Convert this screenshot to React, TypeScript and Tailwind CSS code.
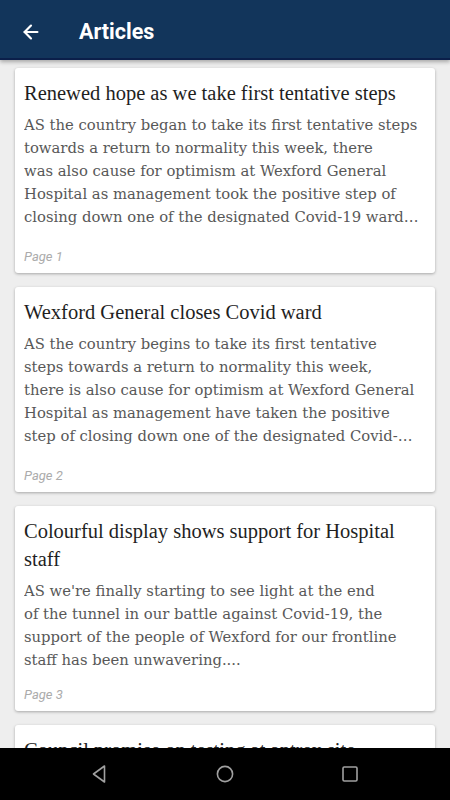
import { ArrowLeft } from "lucide-react";

interface Article {
  title: string;
  lines: string[];
  page: number;
}

// 参照画像の改行位置に合わせて要約を行ごとに保持
const articles: Article[] = [
  {
    title: "Renewed hope as we take first tentative steps",
    lines: [
      "AS the country began to take its first tentative steps",
      "towards a return to normality this week, there",
      "was also cause for optimism at Wexford General",
      "Hospital as management took the positive step of",
      "closing down one of the designated Covid-19 wards at the hospital.",
    ],
    page: 1,
  },
  {
    title: "Wexford General closes Covid ward",
    lines: [
      "AS the country begins to take its first tentative",
      "steps towards a return to normality this week,",
      "there is also cause for optimism at Wexford General",
      "Hospital as management have taken the positive",
      "step of closing down one of the designated Covid-19 wards.",
    ],
    page: 2,
  },
  {
    title: "Colourful display shows support for Hospital staff",
    lines: [
      "AS we're finally starting to see light at the end",
      "of the tunnel in our battle against Covid-19, the",
      "support of the people of Wexford for our frontline",
      "staff has been unwavering....",
    ],
    page: 3,
  },
  {
    title: "Council promise on testing at antrex site",
    lines: [
      "COUNCILLORS have been assured that testing will be",
      "carried out at the former antrex site before any",
      "works begin.",
    ],
    page: 4,
  },
];

function ArticleCard({ article }: { article: Article }) {
  return (
    <div className="bg-white rounded-[3px] shadow-[0_1px_3px_rgba(0,0,0,0.3)] h-[205px] flex flex-col pl-[9px] pr-[14px] pt-[11px] pb-[8px] shrink-0">
      <h2 className="font-['Liberation_Serif',serif] text-[20.5px] leading-[28px] text-[#1f1f1f]">
        {article.title}
      </h2>
      <div className="mt-[6px] font-['DejaVu_Serif',serif] text-[14.8px] leading-[23px] text-[#585858]">
        {article.lines.map((line, i) => (
          <p key={i} className="whitespace-nowrap overflow-hidden text-ellipsis">
            {line}
          </p>
        ))}
      </div>
      <p className="mt-auto font-['Roboto',sans-serif] italic text-[13px] leading-[16px] text-[#ababab]">
        Page {article.page}
      </p>
    </div>
  );
}

export default function App() {
  return (
    <div className="w-[450px] h-[800px] bg-[#eeeeee] flex flex-col overflow-hidden">
      {/* ツールバー */}
      <div className="h-[60px] bg-[#12355b] border-b-2 border-[#0b1f4a] flex items-center pt-[6px] shrink-0 shadow-[0_2px_4px_rgba(0,0,0,0.3)] z-10">
        <ArrowLeft className="ml-[20px] w-[22px] h-[22px] text-white" strokeWidth={2.4} />
        <h1 className="ml-[37px] font-['Roboto',sans-serif] font-bold text-[21.5px] text-white">
          Articles
        </h1>
      </div>

      {/* 記事リスト */}
      <div className="flex-1 overflow-hidden px-[15px] pt-[8px] flex flex-col gap-[14px]">
        {articles.map((a) => (
          <ArticleCard key={a.page} article={a} />
        ))}
      </div>

      {/* ナビゲーションバー */}
      <div className="h-[52px] bg-black flex items-center justify-center gap-[103px] shrink-0">
        <svg width="22" height="22" viewBox="0 0 22 22">
          <path d="M15.5 3 L4.5 11 L15.5 19 Z" fill="none" stroke="#a0a0a0" strokeWidth="1.6" strokeLinejoin="round" />
        </svg>
        <svg width="22" height="22" viewBox="0 0 22 22">
          <circle cx="11" cy="11" r="7.6" fill="none" stroke="#a0a0a0" strokeWidth="1.6" />
        </svg>
        <svg width="22" height="22" viewBox="0 0 22 22">
          <rect x="4" y="4" width="14" height="14" rx="1.2" fill="none" stroke="#a0a0a0" strokeWidth="1.6" />
        </svg>
      </div>
    </div>
  );
}
